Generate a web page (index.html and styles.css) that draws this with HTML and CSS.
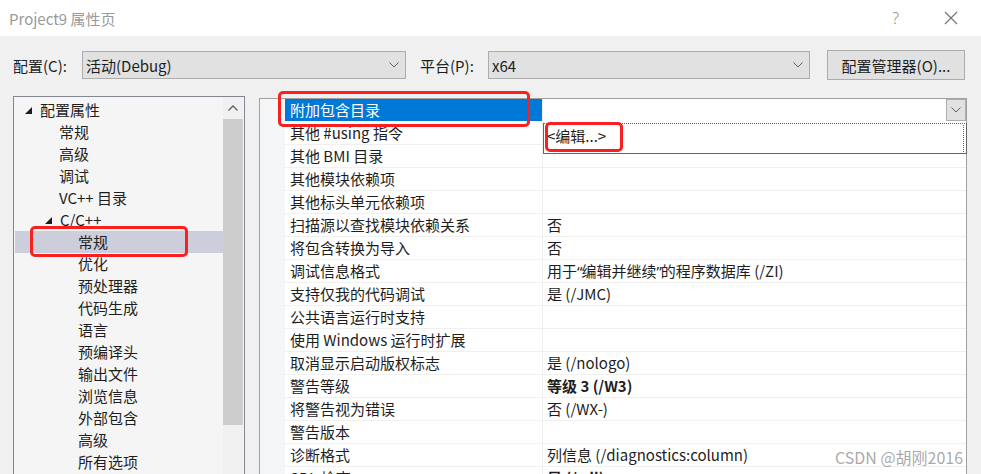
FILE: index.html
```html
<!DOCTYPE html>
<html lang="zh-CN">
<head>
    <meta charset="UTF-8">
    <title>Project9 属性页</title>
    <link rel="stylesheet" href="styles.css">
</head>
<body>
<div class="window">
    <div class="titlebar">
        <span class="title">Project9 属性页</span>
        <span class="help">?</span>
        <svg class="close" width="14" height="14" viewBox="0 0 14 14"><path d="M1 1 L13 13 M13 1 L1 13" stroke="#707070" stroke-width="1.1" fill="none"/></svg>
    </div>

    <div class="toolbar">
        <span class="label">配置(C):</span>
        <div class="select select-config">
            <span>活动(Debug)</span>
            <svg width="10" height="6" viewBox="0 0 10 6"><path d="M0.5 0.5 L5 5 L9.5 0.5" stroke="#606060" fill="none"/></svg>
        </div>
        <span class="label label-platform">平台(P):</span>
        <div class="select select-platform">
            <span>x64</span>
            <svg width="10" height="6" viewBox="0 0 10 6"><path d="M0.5 0.5 L5 5 L9.5 0.5" stroke="#606060" fill="none"/></svg>
        </div>
        <div class="button">配置管理器(O)...</div>
    </div>

    <div class="content">
        <div class="tree">
            <div class="tree-items">
                <div class="node lvl0"><svg class="arrow" width="7" height="7" viewBox="0 0 7 7"><path d="M7 0 L7 7 L0 7 Z" fill="#1e1e1e"/></svg>配置属性</div>
                <div class="node lvl1">常规</div>
                <div class="node lvl1">高级</div>
                <div class="node lvl1">调试</div>
                <div class="node lvl1">VC++ 目录</div>
                <div class="node lvl1 open"><svg class="arrow" width="7" height="7" viewBox="0 0 7 7"><path d="M7 0 L7 7 L0 7 Z" fill="#1e1e1e"/></svg>C/C++</div>
                <div class="node lvl2 selected">常规</div>
                <div class="node lvl2">优化</div>
                <div class="node lvl2">预处理器</div>
                <div class="node lvl2">代码生成</div>
                <div class="node lvl2">语言</div>
                <div class="node lvl2">预编译头</div>
                <div class="node lvl2">输出文件</div>
                <div class="node lvl2">浏览信息</div>
                <div class="node lvl2">外部包含</div>
                <div class="node lvl2">高级</div>
                <div class="node lvl2">所有选项</div>
            </div>
            <div class="scrollbar">
                <div class="scroll-up"><svg width="10" height="6" viewBox="0 0 10 6"><path d="M0.5 5.5 L5 1 L9.5 5.5" stroke="#606060" stroke-width="1.3" fill="none"/></svg></div>
                <div class="thumb"></div>
            </div>
        </div>

        <div class="grid">
            <div class="gutter"></div>
            <div class="rows">
                <div class="row">
                    <div class="name active">附加包含目录</div>
                    <div class="value combo">
                        <div class="drop"><svg width="10" height="6" viewBox="0 0 10 6"><path d="M0.5 0.5 L5 5 L9.5 0.5" stroke="#606060" fill="none"/></svg></div>
                    </div>
                </div>
                <div class="row"><div class="name">其他 #using 指令</div><div class="value"></div></div>
                <div class="row"><div class="name">其他 BMI 目录</div><div class="value"></div></div>
                <div class="row"><div class="name">其他模块依赖项</div><div class="value"></div></div>
                <div class="row"><div class="name">其他标头单元依赖项</div><div class="value"></div></div>
                <div class="row"><div class="name">扫描源以查找模块依赖关系</div><div class="value">否</div></div>
                <div class="row"><div class="name">将包含转换为导入</div><div class="value">否</div></div>
                <div class="row"><div class="name">调试信息格式</div><div class="value">用于<span class="q">“</span>编辑并继续<span class="q">”</span>的程序数据库 (/ZI)</div></div>
                <div class="row"><div class="name">支持仅我的代码调试</div><div class="value">是 (/JMC)</div></div>
                <div class="row"><div class="name">公共语言运行时支持</div><div class="value"></div></div>
                <div class="row"><div class="name">使用 Windows 运行时扩展</div><div class="value"></div></div>
                <div class="row"><div class="name">取消显示启动版权标志</div><div class="value">是 (/nologo)</div></div>
                <div class="row"><div class="name">警告等级</div><div class="value bold">等级 3 (/W3)</div></div>
                <div class="row"><div class="name">将警告视为错误</div><div class="value">否 (/WX-)</div></div>
                <div class="row"><div class="name">警告版本</div><div class="value"></div></div>
                <div class="row"><div class="name">诊断格式</div><div class="value">列信息 (/diagnostics:column)</div></div>
                <div class="row"><div class="name">SDL 检查</div><div class="value bold">是 (/sdl)</div></div>
            </div>
        </div>
    </div>

    <!-- 下拉列表 -->
    <div class="popup"><span>&lt;编辑...&gt;</span></div>

    <!-- 红色标注框 -->
    <div class="mark mark-tree"></div>
    <div class="mark mark-prop"></div>
    <div class="mark mark-edit"></div>

    <div class="watermark">CSDN @胡刚2016</div>
</div>
</body>
</html>
```

FILE: styles.css
```css
body {
    margin: 0;
    font-family: "Noto Sans CJK SC", "Noto Sans", sans-serif;
    font-size: 15px;
    color: #1e1e1e;
    background-color: #f0f0f0;
    overflow: hidden;
}

.window {
    position: relative;
    width: 981px;
    height: 474px;
    overflow: hidden;
}

.titlebar {
    height: 36px;
    background-color: #ffffff;
    display: flex;
    align-items: center;
    padding-left: 9px;
}

.title {
    color: #9a9a9a;
    font-size: 15px;
    flex: 1;
}

.help {
    color: #8a8a8a;
    font-size: 16px;
    margin-right: 45px;
    font-family: "Noto Sans", sans-serif;
    font-weight: 300;
}

.close {
    margin-right: 23px;
}

.toolbar {
    display: flex;
    align-items: center;
    height: 30px;
    margin-top: 14px;
    padding-left: 13px;
}

.label {
    width: 69px;
}

.label-platform {
    margin-left: 14px;
    width: 68px;
}

.select {
    background-color: #e1e1e1;
    border: 1px solid #adadad;
    display: flex;
    align-items: center;
    justify-content: space-between;
    padding: 0 6px 0 3px;
    box-sizing: border-box;
    height: 28px;
}

.select-config {
    width: 324px;
}

.select-platform {
    width: 322px;
}

.button {
    margin-left: 17px;
    width: 138px;
    height: 30px;
    box-sizing: border-box;
    border: 1px solid #adadad;
    background-color: #e1e1e1;
    display: flex;
    align-items: center;
    justify-content: center;
}

.content {
    display: flex;
    align-items: flex-start;
    margin-top: 16px;
    padding-left: 13px;
}

.tree {
    width: 232px;
    height: 400px;
    box-sizing: border-box;
    border: 1px solid #828790;
    background-color: #f5f5f5;
    display: flex;
}

.tree-items {
    flex: 1;
    padding-top: 2px;
    padding-left: 1px;
}

.node {
    height: 22px;
    line-height: 22px;
    display: flex;
    align-items: center;
    white-space: nowrap;
}

.node .arrow {
    margin-right: 8px;
}

.lvl0 {
    padding-left: 10px;
}

.lvl1 {
    padding-left: 44px;
}

.lvl1.open {
    padding-left: 30px;
}

.lvl2 {
    padding-left: 63px;
}

.selected {
    background-color: #cccedb;
}

.scrollbar {
    width: 20px;
    background-color: #f0f0f0;
    margin-right: 1px;
}

.scroll-up {
    height: 22px;
    display: flex;
    align-items: center;
    justify-content: center;
}

.thumb {
    height: 306px;
    background-color: #cdcdcd;
}

.grid {
    margin-left: 14px;
    margin-top: 2px;
    width: 708px;
    height: 400px;
    box-sizing: border-box;
    border: 1px solid #a0a0a0;
    border-bottom: none;
    background-color: #ffffff;
    display: flex;
}

.gutter {
    width: 25px;
    background-color: #f5f6f8;
}

.rows {
    flex: 1;
}

.row {
    display: flex;
    height: 23px;
}

.name,
.value {
    box-sizing: border-box;
    border-bottom: 1px solid #f0f0f0;
    line-height: 22px;
    white-space: nowrap;
}

.name {
    width: 258px;
    padding-left: 5px;
    border-right: 1px solid #f0f0f0;
}

.value {
    flex: 1;
    padding-left: 4px;
}

.value .q {
    font-family: "Noto Sans", sans-serif;
    letter-spacing: -1px;
}

.name.active {
    background-color: #0078d7;
    color: #ffffff;
    border-bottom-color: #ffffff;
}

.bold {
    font-weight: bold;
}

.combo {
    display: flex;
    justify-content: flex-end;
    padding-right: 0;
    border-bottom: none;
}

.drop {
    width: 20px;
    height: 22px;
    box-sizing: border-box;
    background-color: #e1e1e1;
    border: 1px solid #adadad;
    display: flex;
    align-items: center;
    justify-content: center;
}

.popup {
    position: absolute;
    left: 543px;
    top: 123px;
    width: 424px;
    height: 31px;
    box-sizing: border-box;
    background-color: #ffffff;
    border: 1px solid #646464;
    border-top: 1px dotted #646464;
    padding: 1px 2px 1px 3px;
    line-height: 22px;
}

.popup span {
    display: block;
    height: 27px;
    border-right: 1px dotted #646464;
}

.mark {
    position: absolute;
    border: 3px solid #fa2020;
    border-radius: 5px;
    box-sizing: border-box;
}

.mark-tree {
    left: 30px;
    top: 226px;
    width: 158px;
    height: 31px;
}

.mark-prop {
    left: 278px;
    top: 91px;
    width: 252px;
    height: 36px;
}

.mark-edit {
    left: 545px;
    top: 122px;
    width: 78px;
    height: 30px;
}

.watermark {
    position: absolute;
    left: 835px;
    top: 445px;
    font-size: 16px;
    color: rgba(140, 140, 140, 0.75);
    white-space: nowrap;
}
```
